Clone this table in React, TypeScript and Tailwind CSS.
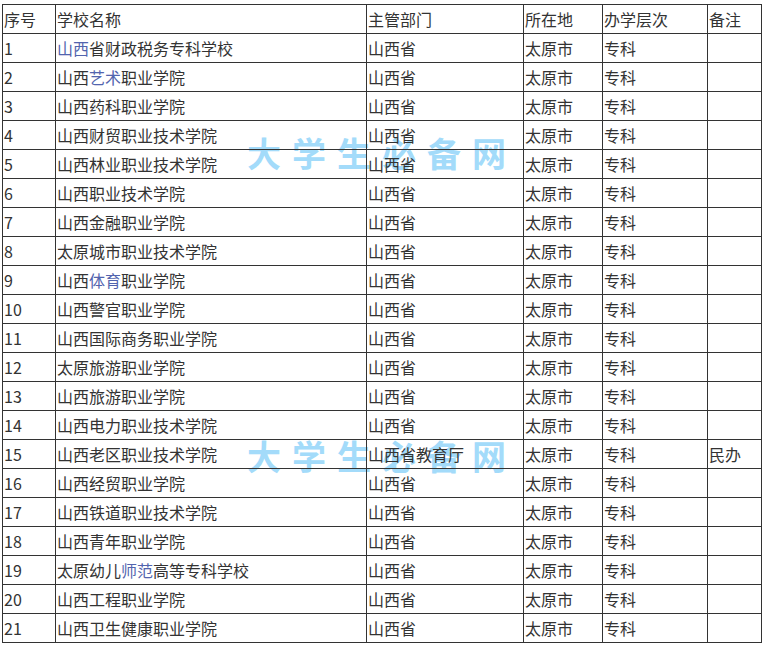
import React from 'react';

type Part = { t: string; link?: boolean };

const rows: { no: string; name: Part[]; dept: string; note?: string }[] = [
  { no: '1', name: [{ t: '山西', link: true }, { t: '省财政税务专科学校' }], dept: '山西省' },
  { no: '2', name: [{ t: '山西' }, { t: '艺术', link: true }, { t: '职业学院' }], dept: '山西省' },
  { no: '3', name: [{ t: '山西药科职业学院' }], dept: '山西省' },
  { no: '4', name: [{ t: '山西财贸职业技术学院' }], dept: '山西省' },
  { no: '5', name: [{ t: '山西林业职业技术学院' }], dept: '山西省' },
  { no: '6', name: [{ t: '山西职业技术学院' }], dept: '山西省' },
  { no: '7', name: [{ t: '山西金融职业学院' }], dept: '山西省' },
  { no: '8', name: [{ t: '太原城市职业技术学院' }], dept: '山西省' },
  { no: '9', name: [{ t: '山西' }, { t: '体育', link: true }, { t: '职业学院' }], dept: '山西省' },
  { no: '10', name: [{ t: '山西警官职业学院' }], dept: '山西省' },
  { no: '11', name: [{ t: '山西国际商务职业学院' }], dept: '山西省' },
  { no: '12', name: [{ t: '太原旅游职业学院' }], dept: '山西省' },
  { no: '13', name: [{ t: '山西旅游职业学院' }], dept: '山西省' },
  { no: '14', name: [{ t: '山西电力职业技术学院' }], dept: '山西省' },
  { no: '15', name: [{ t: '山西老区职业技术学院' }], dept: '山西省教育厅', note: '民办' },
  { no: '16', name: [{ t: '山西经贸职业学院' }], dept: '山西省' },
  { no: '17', name: [{ t: '山西铁道职业技术学院' }], dept: '山西省' },
  { no: '18', name: [{ t: '山西青年职业学院' }], dept: '山西省' },
  { no: '19', name: [{ t: '太原幼儿' }, { t: '师范', link: true }, { t: '高等专科学校' }], dept: '山西省' },
  { no: '20', name: [{ t: '山西工程职业学院' }], dept: '山西省' },
  { no: '21', name: [{ t: '山西卫生健康职业学院' }], dept: '山西省' },
];

const cell = 'border border-[#333] h-[29px] px-[1px] py-0 align-middle whitespace-nowrap';

// 水印，压在表格下面
function Watermark({ top }: { top: string }) {
  return (
    <div
      className={`absolute z-0 left-[245px] ${top} text-[34px] leading-none font-bold text-[#a3dbfa] tracking-[11px] pointer-events-none select-none`}
    >
      大学生必备网
    </div>
  );
}

export default function App() {
  return (
    <div className="bg-white w-[765px] h-[648px] overflow-hidden pt-[4px] pl-[2px] font-['Noto_Sans_CJK_SC','Microsoft_YaHei',sans-serif] text-[16px] text-[#333]">
      <div className="relative w-[759px]">
        <Watermark top="top-[132px]" />
        <Watermark top="top-[435px]" />
        <table className="relative z-10 border-collapse table-fixed w-[759px] leading-none">
          <colgroup>
            <col className="w-[53px]" />
            <col className="w-[311px]" />
            <col className="w-[157px]" />
            <col className="w-[79px]" />
            <col className="w-[105px]" />
            <col className="w-[54px]" />
          </colgroup>
          <tbody>
            <tr>
              <td className={cell}>序号</td>
              <td className={cell}>学校名称</td>
              <td className={cell}>主管部门</td>
              <td className={cell}>所在地</td>
              <td className={cell}>办学层次</td>
              <td className={cell}>备注</td>
            </tr>
            {rows.map((r) => (
              <tr key={r.no}>
                <td className={cell}>{r.no}</td>
                <td className={cell}>
                  {r.name.map((p, i) =>
                    p.link ? (
                      <span key={i} className="text-[#5264ae]">{p.t}</span>
                    ) : (
                      <span key={i}>{p.t}</span>
                    )
                  )}
                </td>
                <td className={cell}>{r.dept}</td>
                <td className={cell}>太原市</td>
                <td className={cell}>专科</td>
                <td className={cell}>{r.note ?? ''}</td>
              </tr>
            ))}
          </tbody>
        </table>
      </div>
    </div>
  );
}
